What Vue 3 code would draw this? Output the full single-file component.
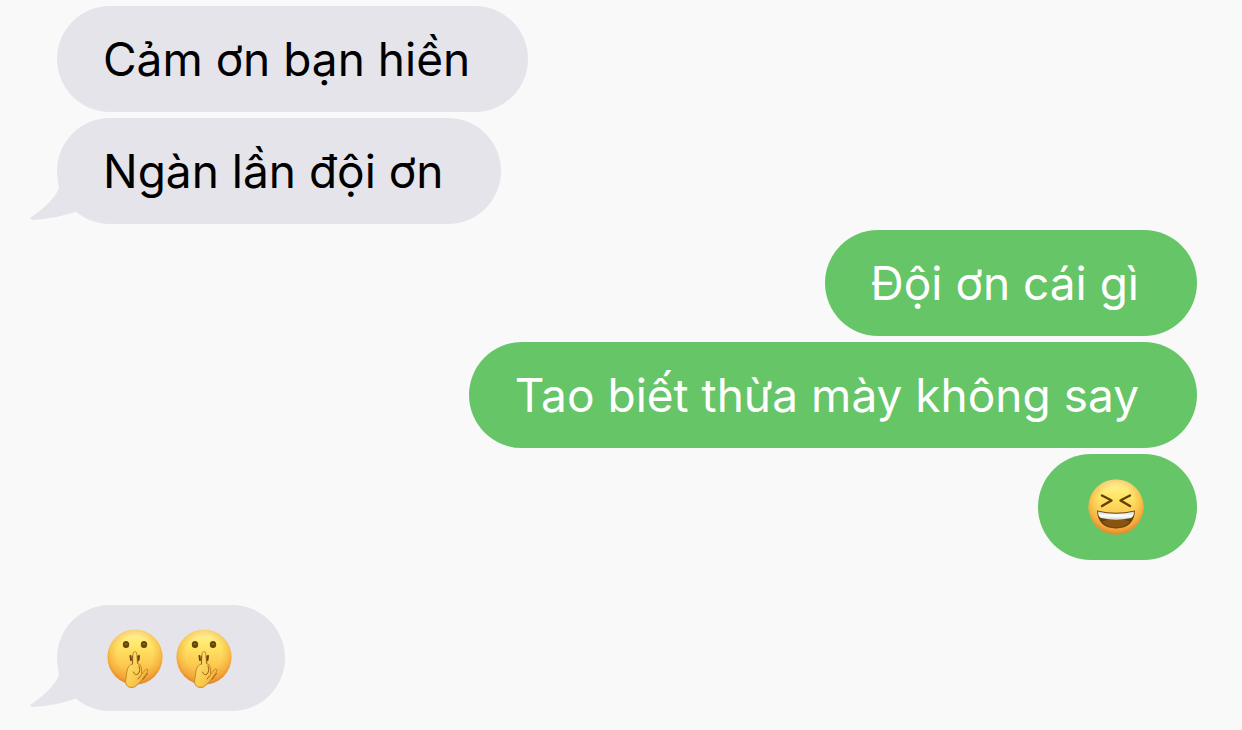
<script setup>
const groups = [
  {
    side: 'received',
    messages: [
      { text: 'Cảm ơn bạn hiền' },
      { text: 'Ngàn lần đội ơn', tail: true },
    ],
  },
  {
    side: 'sent',
    messages: [
      { text: 'Đội ơn cái gì' },
      { text: 'Tao biết thừa mày không say' },
      { emojis: ['laugh'] },
    ],
  },
  {
    side: 'received',
    spaced: true,
    messages: [{ emojis: ['shush', 'shush'], tail: true }],
  },
]
</script>

<template>
  <main class="chat">
    <svg class="defs" width="0" height="0" aria-hidden="true">
      <defs>
        <linearGradient id="face" x1="0" y1="0" x2="0" y2="1">
          <stop offset="0" stop-color="#fff5a4" />
          <stop offset="0.3" stop-color="#ffe666" />
          <stop offset="0.65" stop-color="#fcc850" />
          <stop offset="1" stop-color="#f0a040" />
        </linearGradient>
        <radialGradient id="rim" cx="0.5" cy="0.46" r="0.54">
          <stop offset="0.6" stop-color="#ee9427" stop-opacity="0" />
          <stop offset="0.86" stop-color="#ee9427" stop-opacity="0.4" />
          <stop offset="1" stop-color="#e08326" stop-opacity="0.9" />
        </radialGradient>
        <linearGradient id="hand" x1="0" y1="0" x2="1" y2="1">
          <stop offset="0" stop-color="#ffe982" />
          <stop offset="0.6" stop-color="#fac94d" />
          <stop offset="1" stop-color="#e9a238" />
        </linearGradient>
        <linearGradient id="teeth" x1="0" y1="0" x2="0" y2="1">
          <stop offset="0" stop-color="#d0d0d4" />
          <stop offset="0.5" stop-color="#ffffff" />
          <stop offset="1" stop-color="#d6d4d2" />
        </linearGradient>
      </defs>
    </svg>

    <ul
      v-for="(group, g) in groups"
      :key="g"
      class="group"
      :class="[group.side, { spaced: group.spaced }]"
    >
      <li
        v-for="(message, m) in group.messages"
        :key="m"
        class="bubble"
        :class="{ reaction: message.emojis }"
      >
        <svg v-if="message.tail" class="tail" viewBox="0 0 60 46" aria-hidden="true">
          <path d="M29 0 L30 10 C26 20 16 30 1 40 L3 42 C20 41 34 38 46 34 L56 20 Z" />
        </svg>
        <p v-if="message.text" class="text">{{ message.text }}</p>
        <template v-for="(emoji, e) in message.emojis" :key="e">
          <svg v-if="emoji === 'laugh'" class="emoji" viewBox="0 -1 56 60" role="img" aria-label="😆">
            <circle cx="28" cy="28" r="27.5" fill="url(#face)" />
            <circle cx="28" cy="28" r="27.5" fill="url(#rim)" />
            <path d="M14 16.500 Q20 19.500 23.500 21.500 Q20 23.500 14 27" class="stroke" />
            <path d="M42 16.500 Q36 19.500 32.500 21.500 Q36 23.500 42 27" class="stroke" />
            <path d="M9 31.500 Q28 36 47 31.500 Q46 49 28 49.500 Q10 49 9 31.500Z" fill="#63400d" />
            <path d="M14 42.500 Q28 37 42 42.500 Q37 48.500 28 48.500 Q19 48.500 14 42.500Z" fill="#89540f" />
            <path d="M10 32.500 Q28 37 46 32.500 Q46 37.500 43 39 Q28 42.500 13 39 Q10 37.500 10 32.500Z" fill="url(#teeth)" />
          </svg>
          <svg v-else class="emoji" viewBox="0 0 56 60" role="img" aria-label="🤫">
            <circle cx="28" cy="28" r="27.500" fill="url(#face)" />
            <circle cx="28" cy="28" r="27.500" fill="url(#rim)" />
            <ellipse cx="19" cy="15.500" rx="3.200" ry="3.500" fill="#654408" />
            <ellipse cx="37" cy="15.500" rx="3.200" ry="3.500" fill="#654408" />
            <path d="M17.500 15.500 Q19 14 20.500 15.500 M35.500 15.500 Q37 14 38.500 15.500" class="glint" />
            <path d="M23.500 27 L24 31 M32 27 L31.500 31" class="lips" />
            <path
              d="M25.500 35 L26 25 Q26.200 22.500 27.800 22.500 Q29.700 22.500 29.800 25 L30.500 34.500 Q34 35 34.500 39 L34.500 45.500 L38.500 40.500 Q40 39.500 40.700 40.700 Q41.200 42.500 39 45 L34 52 Q30.500 56 27.500 58 Q19.500 60 18.500 53 L20 42 Q21 36 25.500 35Z"
              class="hand"
            />
            <path d="M25.500 27 L25.500 35 M30.300 27 L30.800 34 M32 37 Q34 42 31 45 Q28 47 26.500 43" class="crease" />
            <path d="M34 46.500 L31 50 M36 50.500 L40.500 44.500" class="shade" />
          </svg>
        </template>
      </li>
    </ul>
  </main>
</template>

<style>
body {
  margin: 0;
  background: #f9f9fa;
}
</style>

<style scoped>
.chat {
  box-sizing: border-box;
  min-height: 100vh;
  padding: 6px 45px 19px 57px;
  display: flex;
  flex-direction: column;
  gap: 6px;
  background: #f9f9fa;
  font-family: Inter, "Liberation Sans", sans-serif;
}
.defs {
  position: absolute;
}
.group {
  margin: 0;
  padding: 0;
  list-style: none;
  display: flex;
  flex-direction: column;
  align-items: flex-start;
  gap: 6px;
}
.sent {
  align-items: flex-end;
}
.spaced {
  margin-top: 39px;
}
.bubble {
  position: relative;
  box-sizing: border-box;
  min-height: 106px;
  padding: 24px 58px 24px 46px;
  border-radius: 53px;
  display: flex;
  align-items: center;
  background: #e5e4ea;
  color: #000;
}
.sent .bubble {
  background: #66c567;
  color: #fff;
}
.bubble.reaction {
  gap: 13px;
  padding: 24px 53px 22px 50px;
}
.text {
  margin: 0;
  font-size: 46px;
  line-height: 58px;
}
.tail {
  position: absolute;
  left: -28px;
  bottom: 0;
  width: 60px;
  height: 46px;
  fill: #e5e4ea;
}
.emoji {
  display: block;
  width: 56px;
  height: 60px;
}
.stroke {
  fill: none;
  stroke: #633f08;
  stroke-width: 2.5;
  stroke-linecap: round;
  stroke-linejoin: round;
}
.glint {
  fill: none;
  stroke: #a17a28;
  stroke-width: 1;
}
.lips {
  fill: none;
  stroke: #6b430d;
  stroke-width: 2;
  stroke-linecap: round;
}
.hand {
  fill: url(#hand);
  stroke: #c98a22;
  stroke-width: 1;
}
.crease {
  fill: none;
  stroke: #95621a;
  stroke-width: 1;
  stroke-linecap: round;
}
.shade {
  fill: none;
  stroke: #a5651c;
  stroke-width: 1;
  stroke-linecap: round;
}
</style>
